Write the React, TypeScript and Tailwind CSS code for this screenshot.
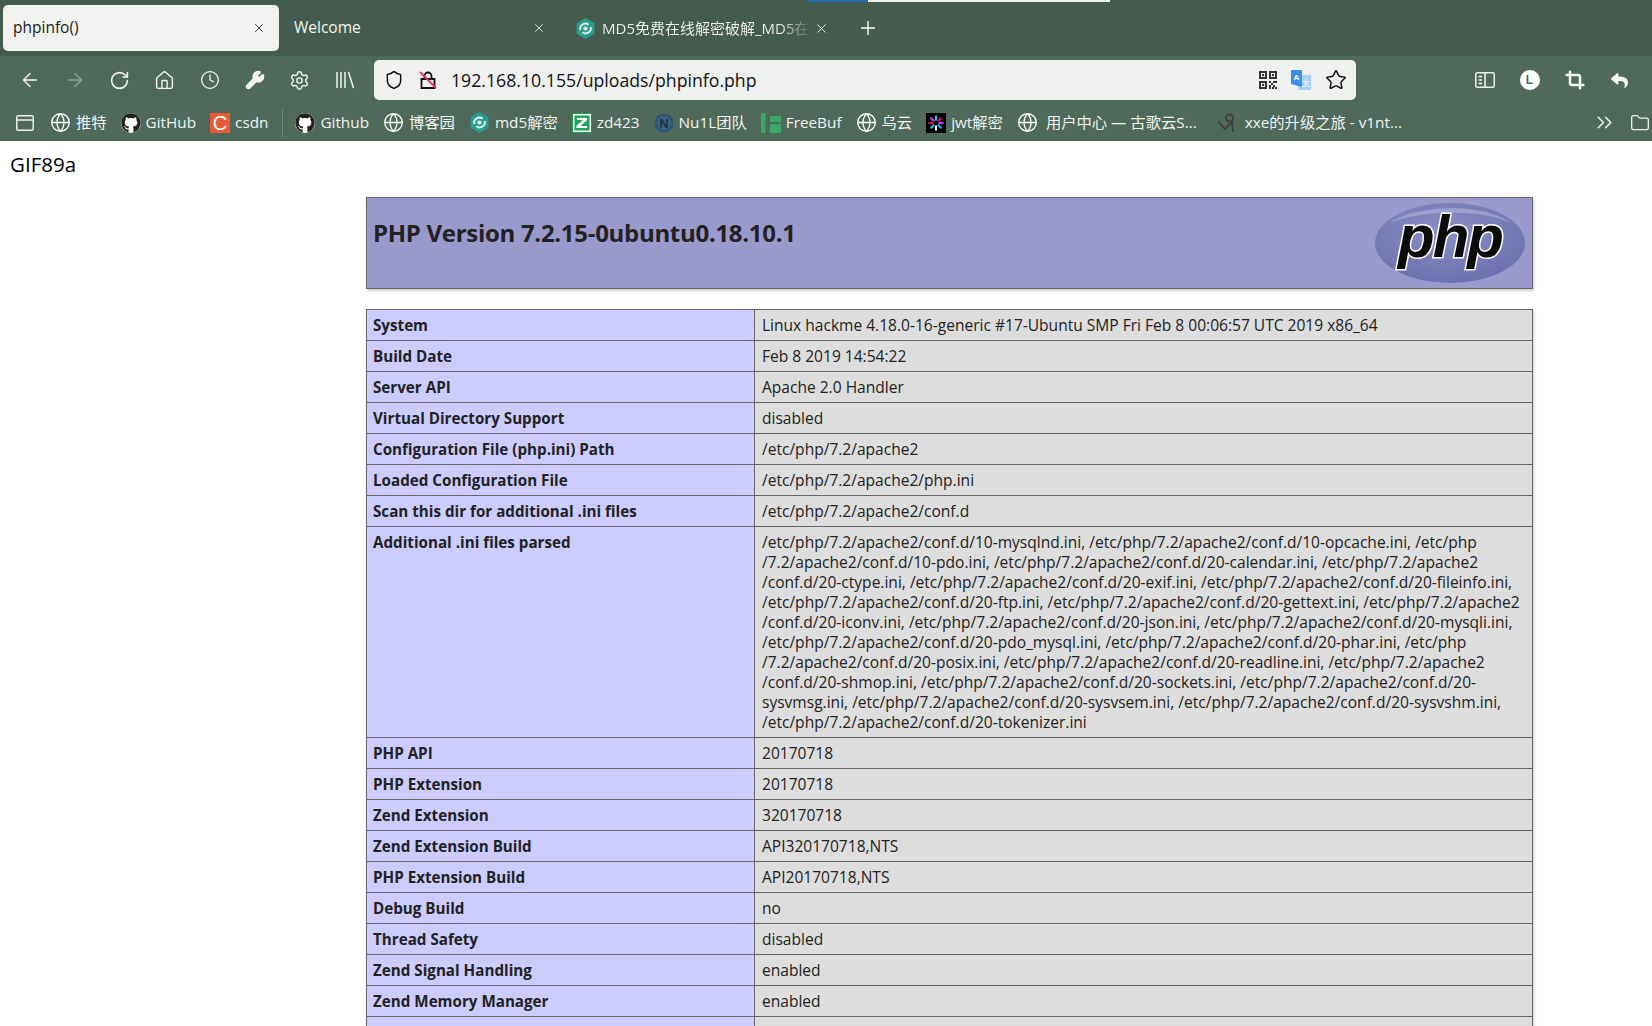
import React from "react";
import {
  ArrowLeft,
  ArrowRight,
  ChevronsRight,
  Clock,
  Crop,
  Folder,
  Globe,
  House,
  Plus,
  RotateCw,
  Settings,
  Shield,
  Star,
  Wrench,
  X,
} from "lucide-react";
import { FaGithub, FaReply } from "react-icons/fa";

const sans = "font-['Open_Sans','Noto_Sans_CJK_SC',sans-serif]";

function Md5Icon({ size = 20 }: { size?: number }) {
  return (
    <svg width={size} height={size} viewBox="0 0 20 20" className="shrink-0">
      <path d="M10 0 18.5 5v10L10 20 1.500 15V5z" fill="#2a9d8f" />
      <path d="M5 11.500a5 5 0 0 1 8-5M15 8.500a5 5 0 0 1-8 5" stroke="#dff3ef" strokeWidth="1.800" fill="none" />
      <circle cx="10" cy="10" r="2" fill="#dff3ef" />
    </svg>
  );
}

function GithubIcon() {
  return (
    <span className="flex h-[20px] w-[20px] shrink-0 items-center justify-center rounded-full bg-white">
      <FaGithub size={20} color="#222" />
    </span>
  );
}

function GlobeIcon() {
  return <Globe size={21} strokeWidth={1.5} className="shrink-0 text-white" />;
}

function CsdnIcon() {
  return (
    <span className="flex h-[20px] w-[20px] shrink-0 items-center justify-center bg-[#ea5a34] font-['Liberation_Sans',sans-serif] text-[20px] leading-none text-white">
      C
    </span>
  );
}

function ZIcon() {
  return (
    <svg width="20" height="20" viewBox="0 0 20 20" className="shrink-0">
      <rect width="20" height="20" fill="#1f9d55" />
      <rect x="1" y="1" width="18" height="18" fill="#f2f7f2" />
      <rect x="2.500" y="2.500" width="15" height="15" fill="#22a35a" />
      <path d="M5 5h10v2.200L8.500 13H15v2H4.500v-2.200L11 7H5z" fill="#fff" />
    </svg>
  );
}

function NulIcon() {
  return (
    <svg width="20" height="20" viewBox="0 0 20 20" className="shrink-0">
      <circle cx="10" cy="10" r="9.500" fill="#2c5573" />
      <circle cx="10" cy="10" r="7" fill="#3d6480" />
      <text x="10" y="14.500" textAnchor="middle" fontSize="13" fontWeight="700" fontFamily="Liberation Sans" fill="#16344c">
        N
      </text>
    </svg>
  );
}

function FreeBufIcon() {
  return (
    <svg width="20" height="20" viewBox="0 0 20 20" className="shrink-0">
      <rect x="0" y="0" width="4.500" height="20" fill="#3aa768" />
      <rect x="9" y="3" width="11" height="6" fill="#3aa768" />
      <rect x="9" y="11" width="11" height="9" fill="#3aa768" />
    </svg>
  );
}

function JwtIcon() {
  const colors = ["#00d2f3", "#fb015b", "#d63aff", "#00b9f1", "#fff"];
  return (
    <svg width="20" height="20" viewBox="0 0 20 20" className="shrink-0">
      <rect width="20" height="20" fill="#000" />
      {[0, 45, 90, 135, 180, 225, 270, 315].map((deg, i) => (
        <rect
          key={deg}
          x="9"
          y="2.500"
          width="2"
          height="5"
          fill={colors[i % colors.length]}
          transform={`rotate(${deg} 10 10)`}
        />
      ))}
    </svg>
  );
}

function XxeIcon() {
  return (
    <svg width="20" height="22" viewBox="0 0 20 22" className="shrink-0" fill="none" stroke="#3f3f3f" strokeWidth="2">
      <circle cx="12.500" cy="6" r="3.500" />
      <path d="M1 9.500 8 17l7-7 1 10" />
    </svg>
  );
}

type Bookmark = { icon: React.ReactNode; label: string; sep?: boolean; wide?: boolean };

const bookmarks: Bookmark[] = [
  { icon: <GlobeIcon />, label: "推特" },
  { icon: <GithubIcon />, label: "GitHub" },
  { icon: <CsdnIcon />, label: "csdn", sep: true },
  { icon: <GithubIcon />, label: "Github" },
  { icon: <GlobeIcon />, label: "博客园" },
  { icon: <Md5Icon size={21} />, label: "md5解密" },
  { icon: <ZIcon />, label: "zd423" },
  { icon: <NulIcon />, label: "Nu1L团队" },
  { icon: <FreeBufIcon />, label: "FreeBuf" },
  { icon: <GlobeIcon />, label: "乌云" },
  { icon: <JwtIcon />, label: "jwt解密" },
  { icon: <GlobeIcon />, label: "用户中心 — 古歌云S...", wide: true },
  { icon: <XxeIcon />, label: "xxe的升级之旅 - v1nt...", wide: true },
];

const parsedIni = [
  "/etc/php/7.2/apache2/conf.d/10-mysqlnd.ini, /etc/php/7.2/apache2/conf.d/10-opcache.ini, /etc/php",
  "/7.2/apache2/conf.d/10-pdo.ini, /etc/php/7.2/apache2/conf.d/20-calendar.ini, /etc/php/7.2/apache2",
  "/conf.d/20-ctype.ini, /etc/php/7.2/apache2/conf.d/20-exif.ini, /etc/php/7.2/apache2/conf.d/20-fileinfo.ini,",
  "/etc/php/7.2/apache2/conf.d/20-ftp.ini, /etc/php/7.2/apache2/conf.d/20-gettext.ini, /etc/php/7.2/apache2",
  "/conf.d/20-iconv.ini, /etc/php/7.2/apache2/conf.d/20-json.ini, /etc/php/7.2/apache2/conf.d/20-mysqli.ini,",
  "/etc/php/7.2/apache2/conf.d/20-pdo_mysql.ini, /etc/php/7.2/apache2/conf.d/20-phar.ini, /etc/php",
  "/7.2/apache2/conf.d/20-posix.ini, /etc/php/7.2/apache2/conf.d/20-readline.ini, /etc/php/7.2/apache2",
  "/conf.d/20-shmop.ini, /etc/php/7.2/apache2/conf.d/20-sockets.ini, /etc/php/7.2/apache2/conf.d/20-",
  "sysvmsg.ini, /etc/php/7.2/apache2/conf.d/20-sysvsem.ini, /etc/php/7.2/apache2/conf.d/20-sysvshm.ini,",
  "/etc/php/7.2/apache2/conf.d/20-tokenizer.ini",
];

const rows: [string, string | string[]][] = [
  ["System", "Linux hackme 4.18.0-16-generic #17-Ubuntu SMP Fri Feb 8 00:06:57 UTC 2019 x86_64"],
  ["Build Date", "Feb 8 2019 14:54:22"],
  ["Server API", "Apache 2.0 Handler"],
  ["Virtual Directory Support", "disabled"],
  ["Configuration File (php.ini) Path", "/etc/php/7.2/apache2"],
  ["Loaded Configuration File", "/etc/php/7.2/apache2/php.ini"],
  ["Scan this dir for additional .ini files", "/etc/php/7.2/apache2/conf.d"],
  ["Additional .ini files parsed", parsedIni],
  ["PHP API", "20170718"],
  ["PHP Extension", "20170718"],
  ["Zend Extension", "320170718"],
  ["Zend Extension Build", "API320170718,NTS"],
  ["PHP Extension Build", "API20170718,NTS"],
  ["Debug Build", "no"],
  ["Thread Safety", "disabled"],
  ["Zend Signal Handling", "enabled"],
  ["Zend Memory Manager", "enabled"],
  ["", ""],
];

function ToolIcon({ children }: { children: React.ReactNode }) {
  return <span className="flex w-[45px] shrink-0 items-center justify-center text-[#f1f4f1]">{children}</span>;
}

function PhpLogo() {
  return (
    <svg width="152" height="82" viewBox="0 0 152 82" className="shrink-0">
      <defs>
        <radialGradient id="phpOval" cx="45%" cy="35%" r="70%">
          <stop offset="0%" stopColor="#8b8fc4" />
          <stop offset="100%" stopColor="#6a6fae" />
        </radialGradient>
      </defs>
      <ellipse cx="76" cy="41" rx="75" ry="40" fill="url(#phpOval)" />
      <path d="M14 22C40 2 112 0 138 22 112 6 40 8 14 22z" fill="#a9abd6" opacity="0.7" />
      <text
        x="76"
        y="55"
        textAnchor="middle"
        fontFamily="Liberation Sans"
        fontWeight="700"
        fontStyle="italic"
        fontSize="60"
        letterSpacing="-2"
        fill="#0b0b0b"
        stroke="#fff"
        strokeWidth="3"
        paintOrder="stroke"
      >
        php
      </text>
    </svg>
  );
}

export default function App() {
  return (
    <div className={`h-[1026px] w-[1652px] overflow-hidden bg-white ${sans}`}>
      {/* tab strip */}
      <div className="h-[56px] bg-[#445b4d]">
        <div className="ml-[808px] flex h-[2px]">
          <div className="w-[60px] bg-[#1e6fb0]" />
          <div className="w-[242px] bg-[#f0f2f0]" />
        </div>
        <div className="mt-[3px] flex h-[46px] items-stretch text-[15.5px] text-[#f1f4f1]">
          <div className="ml-[3px] flex w-[276px] items-center justify-between rounded-[5px] bg-[#eff2ef] pl-[10px] pr-[13px] text-[#222]">
            <span>phpinfo()</span>
            <X size={14} strokeWidth={1.5} />
          </div>
          <div className="flex w-[272px] items-center justify-between pl-[15px] pr-[5px]">
            <span>Welcome</span>
            <X size={14} strokeWidth={1.5} />
          </div>
          <div className="ml-[24px] flex w-[254px] items-center gap-[6px]">
            <Md5Icon size={21} />
            <span className="w-[211px] overflow-hidden whitespace-nowrap bg-gradient-to-r from-[#f1f4f1] from-[85%] to-transparent bg-clip-text text-[15px] text-transparent">
              MD5免费在线解密破解_MD5在线加密
            </span>
            <X size={15} strokeWidth={1.5} className="-ml-[3px] shrink-0" />
          </div>
          <div className="ml-[28px] flex items-center text-white">
            <Plus size={22} strokeWidth={1.5} />
          </div>
        </div>
      </div>

      {/* toolbar */}
      <div className="flex h-[51px] items-center bg-[#4f6a5b] pb-[3px] pl-[7px]">
        <ToolIcon>
          <ArrowLeft size={22} strokeWidth={1.5} />
        </ToolIcon>
        <ToolIcon>
          <ArrowRight size={22} strokeWidth={1.5} className="text-[#8fa398]" />
        </ToolIcon>
        <ToolIcon>
          <RotateCw size={21} strokeWidth={1.8} />
        </ToolIcon>
        <ToolIcon>
          <House size={21} strokeWidth={1.6} />
        </ToolIcon>
        <ToolIcon>
          <Clock size={20} strokeWidth={1.6} />
        </ToolIcon>
        <ToolIcon>
          <Wrench size={20} strokeWidth={2.2} fill="currentColor" />
        </ToolIcon>
        <ToolIcon>
          <Settings size={21} strokeWidth={1.6} />
        </ToolIcon>
        <ToolIcon>
          <svg width="20" height="20" viewBox="0 0 20 20" stroke="currentColor" strokeWidth="1.500" fill="none">
            <path d="M2 2v16M6 2v16M10 2v16M13.500 2l5 16" />
          </svg>
        </ToolIcon>
        <div className="ml-[7px] flex h-[40px] w-[982px] items-center rounded-[5px] bg-[#eef1ee] pl-[10px] pr-[9px] text-[#111]">
          <Shield size={20} strokeWidth={1.8} />
          <svg width="20" height="20" viewBox="0 0 20 20" className="ml-[14px]" fill="none">
            <path d="M6.500 9V6a3.500 3.500 0 0 1 7 0v3M3.500 9h13v9h-13z" stroke="#111" strokeWidth="1.800" />
            <path d="M2 2l16 16" stroke="#e8305f" strokeWidth="1.800" />
          </svg>
          <span className="ml-[13px] text-[17.7px]">192.168.10.155/uploads/phpinfo.php</span>
          <svg width="18" height="18" viewBox="0 0 18 18" className="ml-auto" fill="#333">
            <path d="M0 0h8v8H0zM2 2v4h4V2zM10 0h8v8h-8zM12 2v4h4V2zM0 10h8v8H0zM2 12v4h4v-4zM3 3h2v2H3zM13 3h2v2h-2zM3 13h2v2H3zM10 10h2v2h-2zM14 10h4v2h-4zM12 12h2v2h-2zM10 14h2v4h-2zM14 14h2v2h-2zM16 16h2v2h-2zM13 16h2v2h-2z" fillRule="evenodd" />
          </svg>
          <svg width="22" height="22" viewBox="0 0 22 22" className="ml-[13px]">
            <rect x="8" y="6" width="13" height="15" rx="1" fill="#a5d0f7" />
            <path d="M1 1h11v17L1 15z" fill="#3f8fe6" />
            <text x="6.500" y="11" textAnchor="middle" fontSize="8" fontWeight="700" fontFamily="Liberation Sans" fill="#fff">
              A
            </text>
            <text x="15.500" y="17" textAnchor="middle" fontSize="8" fontFamily="Liberation Sans" fill="#fff">
              文
            </text>
          </svg>
          <Star size={22} strokeWidth={1.6} className="ml-[13px]" />
        </div>
        <div className="ml-[106px] flex text-[#f1f4f1]">
          <ToolIcon>
            <svg width="20" height="18" viewBox="0 0 20 18" fill="none" stroke="currentColor" strokeWidth="1.500">
              <rect x="0.750" y="1.750" width="18.500" height="14.500" rx="1.500" />
              <path d="M10 2v14M3.500 5.500h3.500M3.500 9h3.500M3.500 12.500h3.500" />
            </svg>
          </ToolIcon>
          <ToolIcon>
            <span className="flex h-[20px] w-[20px] items-center justify-center rounded-full bg-white font-['Liberation_Sans',sans-serif] text-[12px] font-bold text-[#4f6a5b]">
              L
            </span>
          </ToolIcon>
          <ToolIcon>
            <Crop size={20} strokeWidth={3} />
          </ToolIcon>
          <ToolIcon>
            <FaReply size={17} />
          </ToolIcon>
        </div>
      </div>

      {/* bookmarks */}
      <div className="flex h-[34px] items-center whitespace-nowrap border-b border-[#45594d] bg-[#4f6a5b] pb-[2px] pl-[16px] pr-[2px] text-[15.3px] text-[#f1f4f1]">
        <svg width="18" height="18" viewBox="0 0 18 18" className="mr-[16px] shrink-0" fill="none" stroke="#eef1ee" strokeWidth="1.500">
          <rect x="0.750" y="1.750" width="16.500" height="14.500" rx="1.500" />
          <path d="M1 6h16" />
        </svg>
        {bookmarks.map((b) => (
          <React.Fragment key={b.label}>
            <div className={b.wide ? "mr-[20px] flex items-center gap-[8px]" : "mr-[14px] flex items-center gap-[5px]"}>
              {b.icon}
              <span>{b.label}</span>
            </div>
            {b.sep ? <div className="mr-[12px] h-[28px] w-px bg-[#75887c]" /> : null}
          </React.Fragment>
        ))}
        <ChevronsRight size={25} strokeWidth={1.5} className="ml-auto" />
        <Folder size={20} strokeWidth={1.5} className="ml-[13px]" />
      </div>

      {/* page */}
      <p className="pl-[10px] pt-[10px] text-[20.5px] leading-[26px] text-black">GIF89a</p>
      <div className="ml-[366px] mt-[20px] w-[1167px] text-[#222]">
        <div className="flex h-[92px] justify-between border border-[#666] bg-[#9999cc] pl-[6px] pr-[6px] pt-[4px] shadow-[1px_2px_3px_#ccc]">
          <h1 className="pt-[14px] text-[24px] font-bold leading-[34px] tracking-[-0.3px]">PHP Version 7.2.15-0ubuntu0.18.10.1</h1>
          <PhpLogo />
        </div>
        <table className="mt-[20px] w-full table-fixed border-collapse shadow-[1px_2px_3px_#ccc]">
          <colgroup>
            <col className="w-[388px]" />
            <col />
          </colgroup>
          <tbody>
            {rows.map(([name, value], i) => (
              <tr key={i} className="h-[31px]">
                <td className="border border-[#666] bg-[#ccccff] px-[6px] py-[5px] align-top text-[15.2px] font-bold leading-[20px]">{name}</td>
                <td className="border border-[#666] bg-[#dddddd] py-[5px] pl-[7px] pr-[6px] align-top text-[15.55px] leading-[20px] whitespace-nowrap">
                  {Array.isArray(value)
                    ? value.map((line) => <div key={line}>{line}</div>)
                    : value}
                </td>
              </tr>
            ))}
          </tbody>
        </table>
      </div>
    </div>
  );
}
